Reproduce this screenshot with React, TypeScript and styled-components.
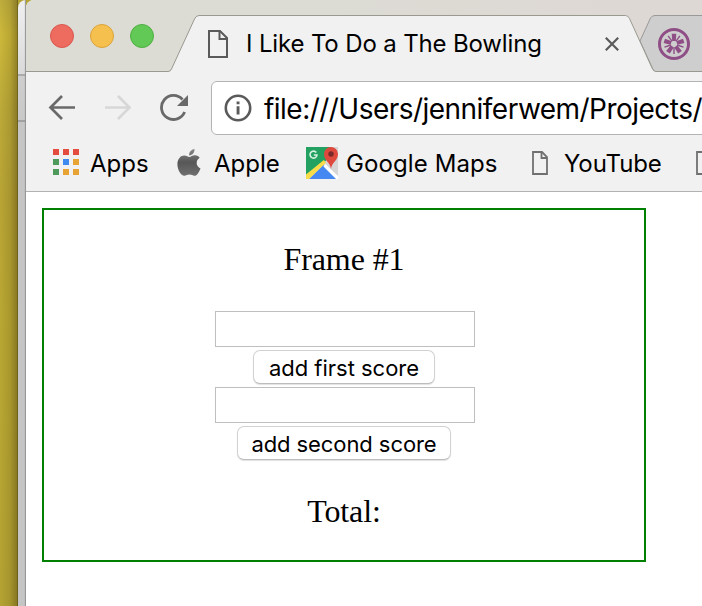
import React from "react";
import styled, { createGlobalStyle } from "styled-components";

const GlobalStyle = createGlobalStyle`
  * { box-sizing: border-box; }
  html, body { margin: 0; padding: 0; overflow: hidden; }
  svg { display: block; flex: none; }
`;

const Screen = styled.div`
  display: flex;
  width: 702px;
  height: 606px;
  overflow: hidden;
  background: #b5a334;
`;

const Desktop = styled.div`
  flex: none;
  width: 18px;
  height: 606px;
  background:
    linear-gradient(90deg, rgba(55, 42, 5, 0) 0%, rgba(55, 42, 5, 0.12) 55%, rgba(55, 42, 5, 0.36) 94%, rgba(35, 28, 0, 0.65) 100%),
    linear-gradient(180deg, #bfae3d 0, #cdb93a 35px, #bcaa39 110px, #b9a535 200px, #baa833 320px, #b5a433 606px);
`;

const BackWindow = styled.div`
  flex: none;
  width: 8px;
  height: 606px;
  border-top-left-radius: 8px;
  box-shadow: inset -2px 0 1px -1px #929292;
  background: linear-gradient(
    180deg,
    #f0f0f0 0, #dadada 74px, #aaaaaa 74px, #aaaaaa 76px,
    #cecece 76px, #c8c8c8 120px, #a0a0a0 120px, #a0a0a0 122px, #c5c5c5 122px
  );
`;

const BrowserWindow = styled.div`
  flex: none;
  width: 676px;
  height: 606px;
  overflow: hidden;
  border-top-left-radius: 8px;
  background: #fff;
`;

const TabStrip = styled.div`
  position: relative;
  display: flex;
  align-items: center;
  height: 72px;
  background: linear-gradient(90deg, #dcdcd4 0%, #dcdbd4 45%, #ded8d4 90%);
`;

const TabShapes = styled.svg`
  position: absolute;
  inset: 0;
`;

const Lights = styled.div`
  position: relative;
  display: flex;
  gap: 16px;
  padding-left: 24px;
`;

const Light = styled.span<{ $fill: string; $edge: string }>`
  width: 24px;
  height: 24px;
  border-radius: 50%;
  background: ${(p) => p.$fill};
  border: 1px solid ${(p) => p.$edge};
`;

const TabContent = styled.div`
  position: relative;
  display: flex;
  align-items: center;
  width: 411px;
  margin-left: 54px;
  padding-top: 15px;
`;

const Label = styled.span<{ $size: number; $track: number }>`
  color: #000;
  font-family: Inter, "Liberation Sans", sans-serif;
  font-size: ${(p) => p.$size}px;
  font-weight: 440;
  letter-spacing: ${(p) => p.$track}px;
  line-height: 30px;
  white-space: nowrap;
`;

const TabTitle = styled(Label)`
  flex: 1;
  margin-left: 18px;
`;

const LoweredLabel = styled(Label)`
  padding-top: 2px;
`;

const SecondTab = styled.div`
  position: relative;
  margin-left: 39px;
  padding-top: 16px;
`;

const Toolbar = styled.div`
  display: flex;
  align-items: center;
  height: 63px;
  padding: 9px 0 0 22px;
  background: #f1f1f1;
`;

const NavIcons = styled.div`
  display: flex;
  flex: none;
  gap: 28px;
  width: 163px;
`;

const AddressBar = styled.div`
  display: flex;
  align-items: center;
  gap: 12px;
  flex: none;
  width: 520px;
  height: 54px;
  padding-left: 12px;
  border: 1px solid #b3b3b3;
  border-radius: 6px;
  background: #fff;
`;

const BookmarksBar = styled.div`
  display: flex;
  align-items: center;
  height: 57px;
  padding-left: 27px;
  border-bottom: 1px solid #b2b2b2;
  background: #f1f1f1;
`;

const Bookmark = styled.div<{ $width: number; $gap: number }>`
  display: flex;
  flex: none;
  align-items: center;
  gap: ${(p) => p.$gap}px;
  width: ${(p) => p.$width}px;
`;

const Page = styled.main`
  padding: 16px;
`;

const FrameCard = styled.section`
  display: flex;
  flex-direction: column;
  align-items: center;
  width: 604px;
  height: 354px;
  padding-top: 31px;
  border: 2px solid #008000;
`;

const FrameText = styled.p`
  margin: 0;
  color: #000;
  font-family: "Liberation Serif", serif;
  font-size: 32px;
  letter-spacing: -0.1px;
  line-height: 37px;
`;

const ScoreForm = styled.div`
  display: flex;
  flex-direction: column;
  align-items: center;
  margin: 33px 0 30px;
`;

const ScoreInput = styled.input`
  width: 260px;
  height: 36px;
  margin: 0 0 3px 2px;
  padding: 2px 6px;
  border: 1px solid #bfbfbf;
  border-radius: 0;
  background: #fff;
  font-size: 22px;
  outline: none;
`;

const ScoreButton = styled.button<{ $width: number; $track: number }>`
  width: ${(p) => p.$width}px;
  height: 34px;
  margin: 0 0 3px;
  padding: 2px 0 0;
  border: 1px solid #d2d2d2;
  border-bottom-color: #bcbcbc;
  border-radius: 7px;
  box-shadow: 0 1px 1px rgba(0, 0, 0, 0.12);
  background: #fff;
  color: #000;
  font-family: Inter, "Liberation Sans", sans-serif;
  font-size: 22px;
  font-weight: 440;
  letter-spacing: ${(p) => p.$track}px;
  line-height: 30px;
  white-space: nowrap;
`;

const DocIcon = ({ big = false }: { big?: boolean }) =>
  big ? (
    <svg width="20" height="28" viewBox="0 0 20 28" fill="none" stroke="#5a5a5a" strokeWidth="2">
      <path d="M1 1H12L19 8V27H1Z" />
      <path d="M11.5 1V9H19" />
    </svg>
  ) : (
    <svg width="16" height="24" viewBox="0 0 16 24" fill="none" stroke="#707070" strokeWidth="1.8">
      <path d="M1 1H10L15 6V23H1Z" />
      <path d="M9.5 1V7H15" />
    </svg>
  );

const BackIcon = () => (
  <svg width="28" height="28" viewBox="0 0 28 28" fill="none" stroke="#696969" strokeWidth="2.7">
    <path d="M14 2L2.5 13.5L14 25M3 13.5H27" />
  </svg>
);

const ForwardIcon = () => (
  <svg width="28" height="28" viewBox="0 0 28 28" fill="none" stroke="#d7d7d7" strokeWidth="2.7">
    <path d="M14 2L25.5 13.5L14 25M25 13.5H1" />
  </svg>
);

const ReloadIcon = () => (
  <svg width="28" height="28" viewBox="0 0 28 28">
    <path d="M24.6 18A12 12 0 1 1 22.5 5.5" fill="none" stroke="#696969" strokeWidth="2.8" />
    <path d="M28 1V12H17Z" fill="#696969" />
  </svg>
);

const InfoIcon = () => (
  <svg width="28" height="28" viewBox="0 0 28 28">
    <circle cx="14" cy="14" r="12.2" fill="none" stroke="#5a5a5a" strokeWidth="2.6" />
    <path d="M12.6 7.5H15.5V10.2H12.6ZM12.6 12.3H15.5V20.5H12.6Z" fill="#5a5a5a" />
  </svg>
);

const CloseIcon = () => (
  <svg width="14" height="14" viewBox="0 0 14 14" fill="none" stroke="#5a5a5a" strokeWidth="2.2">
    <path d="M.8.8L13.2 13.2M13.2.8L.8 13.2" />
  </svg>
);

const appColors = ["#e34c3f", "#e34c3f", "#e34c3f", "#4e9a5c", "#4089ef", "#e7a334", "#4e9a5c", "#e7a334", "#e7a334"];

const AppsIcon = () => (
  <svg width="26" height="28" viewBox="0 0 26 28">
    {appColors.map((c, i) => (
      <rect key={i} x={(i % 3) * 10} y={Math.floor(i / 3) * 10} width="6" height="6" fill={c} />
    ))}
  </svg>
);

const AppleIcon = () => (
  <svg width="24" height="28" viewBox="0 0 24 28">
    <defs>
      <linearGradient id="apple" x2="0" y2="1">
        <stop stopColor="#888" />
        <stop offset=".5" stopColor="#575757" />
        <stop offset="1" stopColor="#707070" />
      </linearGradient>
    </defs>
    <path
      fill="url(#apple)"
      d="M12.2 6.5C12 3 14 .8 17.5 0C17.7 3.4 15.5 6.2 12.2 6.5ZM12.3 8C14 8 15.2 6.2 18 6.3C20.2 6.4 21.8 7.4 22.7 8.8C18.2 11.6 19 17.5 23.5 19.4C22.2 22.7 20 26.7 17.5 26.8C15.6 26.8 14.8 25.6 12.5 25.6S9.2 26.8 7.4 26.8C3.8 26.8.4 20.5.4 15.3C.4 9.8 3.6 6.4 7.4 6.4C9.5 6.4 11 8 12.3 8Z"
    />
  </svg>
);

const MapsIcon = () => (
  <svg width="32" height="32" viewBox="0 0 32 32">
    <rect width="32" height="32" fill="#d6d6d6" />
    <path d="M0 0H25V9L0 32Z" fill="#22a161" />
    <path d="M3 32L17.5 18L31 32Z" fill="#4688f1" />
    <path d="M0 27.5V32H3L20 15.5L17.8 13Z" fill="#f8dc48" />
    <path d="M17.5 19.5L19.3 17L32 29V32H30Z" fill="#fff" />
    <path d="M25 22C24.4 15.5 18 13.5 18 7A7 7 0 0 1 32 7C32 13.5 25.7 15.5 25 22Z" fill="#de483d" />
    <circle cx="25" cy="7" r="2.7" fill="#772a29" />
    <path d="M10.3 5.5A3.5 3.5 0 1 0 11 8H7.8" fill="none" stroke="#d7f1e2" strokeWidth="1.6" />
  </svg>
);

const JasmineIcon = () => (
  <svg width="32" height="32" viewBox="-16 -16 32 32">
    <circle r="14.5" fill="none" stroke="#8f4f86" strokeWidth="3" />
    {[0, 1, 2, 3, 4].map((i) => (
      <g key={i} transform={`rotate(${i * 72})`} fill="#8f4f86">
        <path d="M-2.3-10.2H2.3L1.8-3H-1.8Z" />
        <path d="M-.7 3.2H.7V10H-.7Z" />
      </g>
    ))}
  </svg>
);

export default function App() {
  return (
    <>
      <GlobalStyle />
      <Screen>
        <Desktop />
        <BackWindow />
        <BrowserWindow>
          <TabStrip>
            <TabShapes width="676" height="72" viewBox="26 0 676 72">
              <path d="M640 41L650.5 18Q652 15.5 655 15.5H704V71.5H654Z" fill="#cecece" stroke="#999" />
              <path d="M24 73V71.5H168Q170.5 71.5 171.5 69L194.5 19Q196 15.5 199 15.5H625.5Q628 15.5 629.5 18.5L652 68Q653.5 71.5 656 71.5H704V73Z" fill="#f1f1f1" stroke="#999990" />
            </TabShapes>
            <Lights>
              <Light $fill="#ee6b60" $edge="#d9574e" />
              <Light $fill="#f6c04f" $edge="#dba43b" />
              <Light $fill="#62c856" $edge="#4eaf42" />
            </Lights>
            <TabContent>
              <DocIcon big />
              <TabTitle $size={24} $track={-0.15}>I Like To Do a The Bowling</TabTitle>
              <CloseIcon />
            </TabContent>
            <SecondTab>
              <JasmineIcon />
            </SecondTab>
          </TabStrip>
          <Toolbar>
            <NavIcons>
              <BackIcon />
              <ForwardIcon />
              <ReloadIcon />
            </NavIcons>
            <AddressBar>
              <InfoIcon />
              <LoweredLabel $size={28} $track={-0.53}>file:///Users/jenniferwem/Projects/</LoweredLabel>
            </AddressBar>
          </Toolbar>
          <BookmarksBar>
            <Bookmark $width={124} $gap={11}>
              <AppsIcon />
              <LoweredLabel $size={24} $track={0}>Apps</LoweredLabel>
            </Bookmark>
            <Bookmark $width={129} $gap={13}>
              <AppleIcon />
              <LoweredLabel $size={24} $track={0}>Apple</LoweredLabel>
            </Bookmark>
            <Bookmark $width={226} $gap={8}>
              <MapsIcon />
              <LoweredLabel $size={24} $track={0.1}>Google Maps</LoweredLabel>
            </Bookmark>
            <Bookmark $width={164} $gap={16}>
              <DocIcon />
              <LoweredLabel $size={24} $track={-0.1}>YouTube</LoweredLabel>
            </Bookmark>
            <DocIcon />
          </BookmarksBar>
          <Page>
            <FrameCard>
              <FrameText>Frame #1</FrameText>
              <ScoreForm>
                <ScoreInput aria-label="First score" />
                <ScoreButton $width={182} $track={-0.02}>add first score</ScoreButton>
                <ScoreInput aria-label="Second score" />
                <ScoreButton $width={214} $track={-0.08}>add second score</ScoreButton>
              </ScoreForm>
              <FrameText>Total:</FrameText>
            </FrameCard>
          </Page>
        </BrowserWindow>
      </Screen>
    </>
  );
}
